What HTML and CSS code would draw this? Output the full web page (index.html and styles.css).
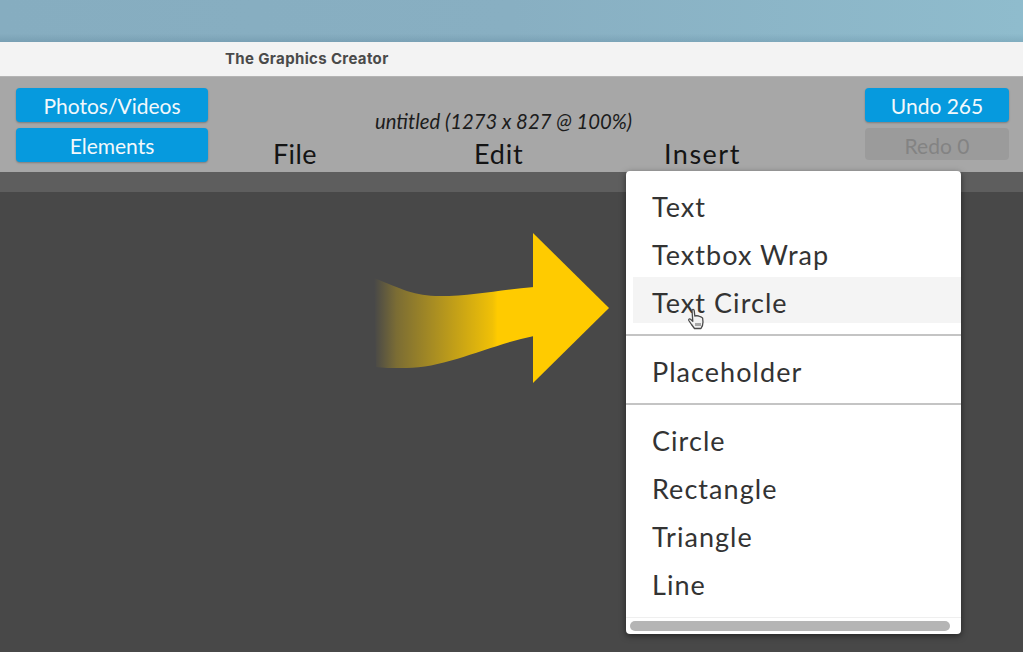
FILE: index.html
```html
<!DOCTYPE html>
<html lang="en">
<head>
  <meta charset="UTF-8">
  <title>The Graphics Creator</title>
  <link rel="stylesheet" href="styles.css">
</head>
<body>
  <div class="desktop"></div>
  <div class="titlebar"><span class="app-name">The Graphics Creator</span></div>
  <div class="toolbar">
    <div class="btn-col">
      <a class="btn" href="#">Photos/Videos</a>
      <a class="btn" href="#">Elements</a>
    </div>
    <div class="center">
      <div class="doc-name">untitled (1273 x 827 @ 100%)</div>
      <div class="menus">
        <span class="menu-file">File</span>
        <span class="menu-edit">Edit</span>
        <span class="menu-insert">Insert</span>
      </div>
    </div>
    <div class="btn-col btn-col-right">
      <a class="btn" href="#">Undo 265</a>
      <a class="btn disabled" href="#">Redo 0</a>
    </div>
  </div>
  <div class="strip"></div>
  <div class="canvas"></div>

  <!-- arrow over the canvas -->
  <svg class="arrow" width="240" height="154" viewBox="0 0 240 154">
    <defs>
      <linearGradient id="fade" x1="0" x2="126" y1="0" y2="0" gradientUnits="userSpaceOnUse">
        <stop offset="0" stop-color="#ffcb00" stop-opacity="0"/>
        <stop offset=".18" stop-color="#ffcb00" stop-opacity=".28"/>
        <stop offset=".94" stop-color="#ffcb00" stop-opacity=".92"/>
        <stop offset=".98" stop-color="#ffcb00"/>
      </linearGradient>
    </defs>
    <path d="M0 47C28 58 40 65 66 65C100 65 130 58 160 56V105C115 114 70 138 30 137C18 137 8 137 2 136Z" fill="url(#fade)"/>
    <path d="M159 2L235 77L159 152Z" fill="#ffcb00"/>
  </svg>

  <div class="dropdown">
    <div class="group">
      <div class="item">Text</div>
      <div class="item">Textbox Wrap</div>
      <div class="item hover">Text Circle</div>
    </div>
    <div class="group">
      <div class="item">Placeholder</div>
    </div>
    <div class="group last">
      <div class="item">Circle</div>
      <div class="item">Rectangle</div>
      <div class="item">Triangle</div>
      <div class="item">Line</div>
    </div>
    <div class="scrollbar"><div class="thumb"></div></div>
  </div>

  <!-- hand cursor -->
  <svg class="cursor" width="20" height="22" viewBox="0 0 20 22">
    <path d="M6 2.5C6 1 8 1 8.2 2.5L8.8 8L10.5 7.6L12.6 8L14.8 8.8L16.6 10L17 14C17 17 16 19 15 20.5H8.5L5.5 16.5L2.8 12.5C2.2 11 3.6 10.4 4.6 11.2L6.8 13.4Z" fill="#f2f2f2" stroke="#4a4a4a" stroke-width="1.3" stroke-linejoin="round"/>
    <path d="M10 15V18M12 15V18M14 15V18" stroke="#4a4a4a" stroke-width=".9"/>
  </svg>
</body>
</html>
```
FILE: styles.css
```css
body {
  margin: 0;
  height: 652px;
  overflow: hidden;
  background: #484848;
  font-family: "Lato", "Noto Sans", sans-serif;
}
.desktop {
  height: 42px;
  background: linear-gradient(180deg, rgba(0, 0, 0, 0) 80%, rgba(0, 40, 70, .1) 100%), linear-gradient(90deg, #86adc0 0%, #88afc2 50%, #8fbccd 100%);
}
.titlebar {
  height: 34px;
  padding-left: 225px;
  background: #f3f3f3;
  font: bold 15px/33px "Inter", "Liberation Sans", sans-serif;
  letter-spacing: .35px;
  color: #4a4a4a;
  box-sizing: border-box;
}
.toolbar {
  height: 96px;
  box-sizing: border-box;
  padding: 11px 14px 0 16px;
  background: #a7a7a7;
  border-top: 1px solid #b4b4b4;
  display: flex;
}
.btn-col {
  width: 192px;
  display: flex;
  flex-direction: column;
  gap: 6px;
}
.btn-col-right {
  width: 144px;
}
.btn {
  height: 34px;
  border-radius: 4px;
  background: #069ade;
  box-shadow: 0 1px 2px rgba(0, 0, 0, .25);
  color: #f2f8fb;
  font-size: 21px;
  line-height: 36px;
  text-align: center;
  text-decoration: none;
}
.btn.disabled {
  height: 32px;
  background: #9b9b9b;
  box-shadow: none;
  color: #838383;
}
.center {
  flex: 1;
}
.doc-name {
  margin-top: 20px;
  padding-left: 167px;
  font-size: 20.3px;
  line-height: 26px;
  font-style: italic;
  color: #1c1c1c;
}
.menus {
  position: relative;
  height: 34px;
  margin-top: 3px;
  font-size: 27px;
  line-height: 34px;
  letter-spacing: .8px;
  color: #141414;
}
.menus span {
  position: absolute;
  top: 0;
}
.menu-file { left: 65px; letter-spacing: .4px; }
.menu-edit { left: 266px; }
.menu-insert { left: 456px; letter-spacing: 1.5px; }
.strip {
  height: 20px;
  background: #5e5e5e;
}
.canvas {
  height: 460px;
  background: #484848;
}
.arrow {
  position: absolute;
  left: 374px;
  top: 231px;
}
.dropdown {
  position: absolute;
  left: 626px;
  top: 171px;
  width: 335px;
  height: 463px;
  box-sizing: border-box;
  padding-top: 12px;
  background: #fff;
  border-radius: 4px;
  box-shadow: 0 2px 6px rgba(0, 0, 0, .5);
  color: #333;
}
.group {
  border-bottom: 2px solid #c4c4c4;
  padding-bottom: 7px;
  margin-bottom: 12px;
}
.group.last {
  border-bottom: 0;
  margin-bottom: 0;
  padding-bottom: 8px;
}
.item {
  height: 48px;
  padding-left: 26px;
  font-size: 27px;
  line-height: 48px;
  letter-spacing: 1.05px;
}
.item.hover {
  height: 46px;
  margin: -2px 0 4px 7px;
  padding-left: 19px;
  line-height: 52px;
  background: #f4f4f4;
}
.scrollbar {
  border-top: 1px solid #efefef;
  padding: 3px 11px 0 4px;
}
.thumb {
  height: 10px;
  border-radius: 5px;
  background: #b5b5b5;
}
.cursor {
  position: absolute;
  left: 686px;
  top: 308px;
}
```
